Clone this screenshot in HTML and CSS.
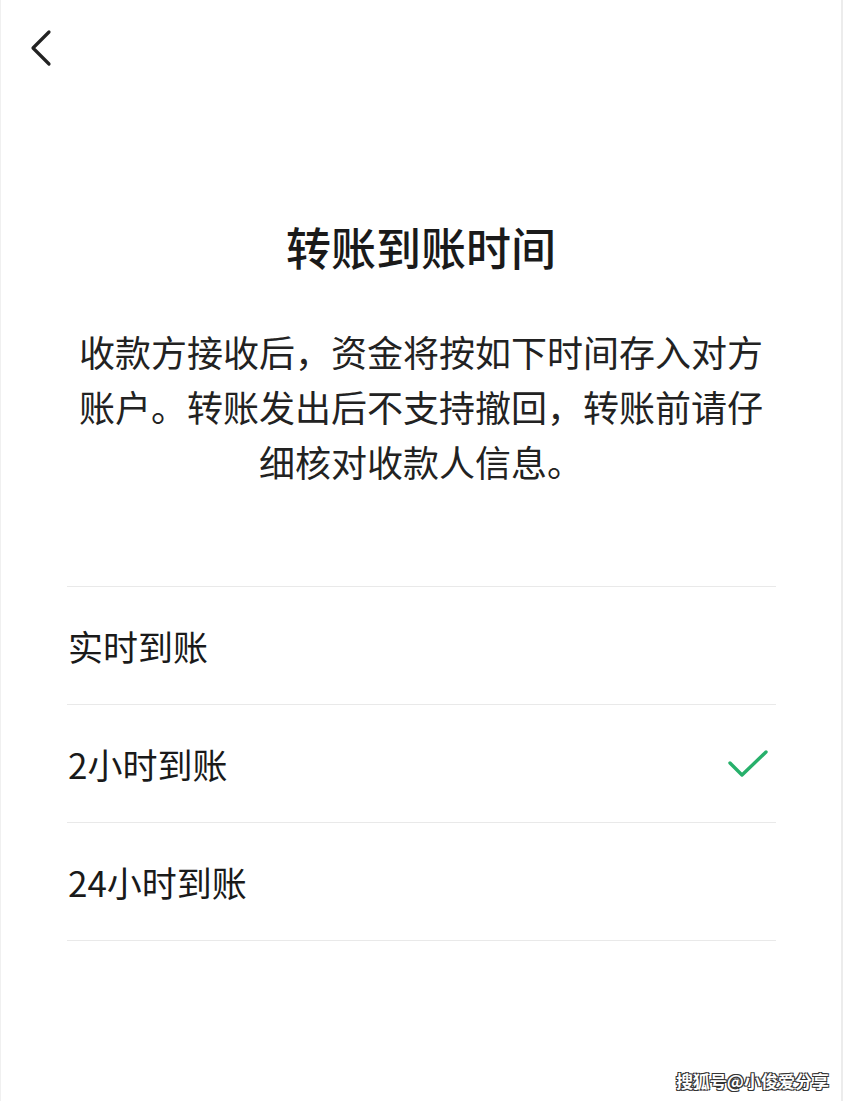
FILE: index.html
```html
<!DOCTYPE html>
<html lang="zh-CN">
<head>
  <meta charset="UTF-8">
  <title>转账到账时间</title>
  <meta name="viewport" content="width=device-width, initial-scale=1.0">
  <link rel="stylesheet" href="styles.css">
</head>
<body>
  <div class="page">
    <!-- Top bar -->
    <div class="navBar">
      <button class="backBtn" aria-label="返回">
        <svg width="26" height="40" viewBox="0 0 26 40">
          <path d="M20 4 L4 20 L20 36" fill="none" stroke="#222" stroke-width="3.2" stroke-linecap="round" stroke-linejoin="round"/>
        </svg>
      </button>
    </div>

    <!-- Heading -->
    <div class="intro">
      <h1 class="title">转账到账时间</h1>
      <p class="desc">收款方接收后，资金将按如下时间存入对方账户。转账发出后不支持撤回，转账前请仔细核对收款人信息。</p>
    </div>

    <!-- Options -->
    <ul class="optionList">
      <li class="option">
        <span class="optionText">实时到账</span>
      </li>
      <li class="option selected">
        <span class="optionText">2小时到账</span>
        <svg class="checkMark" width="42" height="30" viewBox="0 0 42 30">
          <path d="M3 13 L15 25 L39 2" fill="none" stroke="#27b06b" stroke-width="3.4" stroke-linecap="round" stroke-linejoin="round"/>
        </svg>
      </li>
      <li class="option">
        <span class="optionText">24小时到账</span>
      </li>
    </ul>

    <div class="watermark">搜狐号@小俊爱分享</div>
  </div>
</body>
</html>
```

FILE: styles.css
```css
/* Base */
html, body {
  margin: 0;
  padding: 0;
  background: #fff;
}
body {
  font-family: "Noto Sans CJK SC", "Noto Sans", sans-serif;
  color: #1a1a1a;
}
.page {
  position: relative;
  height: 1101px;
  box-sizing: border-box;
  border-left: 1px solid #f0f0f0;
  border-right: 2px solid #ececec;
  overflow: hidden;
}

/* Top bar */
.navBar {
  height: 96px;
  display: flex;
  align-items: flex-start;
  padding: 28px 0 0 28px;
  box-sizing: border-box;
}
.backBtn {
  border: none;
  background: none;
  padding: 0;
  margin: 0;
  cursor: pointer;
  display: block;
}
.backBtn svg {
  display: block;
}

/* Heading */
.intro {
  padding: 121px 66px 0;
  text-align: center;
}
.title {
  margin: 0;
  font-size: 45px;
  line-height: 60px;
  font-weight: 500;
  color: #1a1a1a;
}
.desc {
  margin: 47px 0 0;
  font-size: 36px;
  line-height: 55px;
  color: #222;
}

/* Options */
.optionList {
  list-style: none;
  margin: 97px 65px 0 66px;
  padding: 0;
  border-top: 1px solid #e9e9e9;
}
.option {
  height: 117px;
  border-bottom: 1px solid #e9e9e9;
  display: flex;
  align-items: center;
  justify-content: space-between;
}
.optionText {
  font-size: 35px;
  line-height: 40px;
  color: #1a1a1a;
  padding-left: 1px;
}
.checkMark {
  display: block;
  margin-right: 7px;
  margin-top: 2px;
}

/* Watermark */
.watermark {
  position: absolute;
  right: 12px;
  bottom: 8px;
  font-size: 17px;
  font-weight: 700;
  color: #fff;
  text-shadow: -1px -1px 0 #333, 1px -1px 0 #333, -1px 1px 0 #333, 1px 1px 0 #333;
}
```
